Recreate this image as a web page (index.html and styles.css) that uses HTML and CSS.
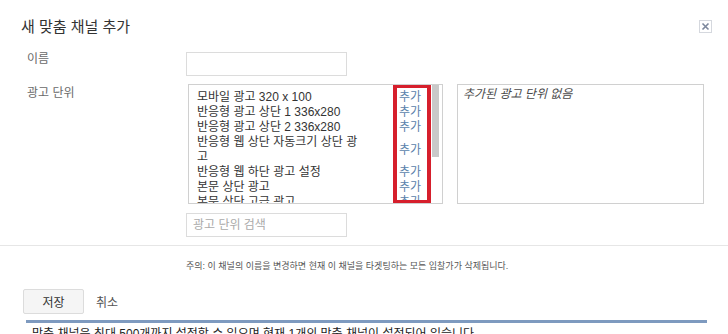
FILE: index.html
```html
<!DOCTYPE html>
<html lang="ko">
<head>
    <meta charset="UTF-8">
    <title>새 맞춤 채널 추가</title>
    <link rel="stylesheet" href="styles.css">
</head>
<body>
    <div class="dialog">
        <div class="dialog-head">
            <h2 class="dialog-title">새 맞춤 채널 추가</h2>
            <button class="close" title="닫기">
                <svg width="13" height="13" viewBox="0 0 13 13">
                    <rect x="0.5" y="0.5" width="12" height="12" fill="#fff" stroke="#d5d8de"/>
                    <path d="M3.5 3.5 L9.5 9.5 M9.5 3.5 L3.5 9.5" stroke="#7c879c" stroke-width="1.6"/>
                </svg>
            </button>
        </div>

        <div class="form">
            <div class="form-row">
                <label class="form-label" for="nombreCanal">이름</label>
                <input type="text" id="nombreCanal" class="text-input">
            </div>

            <div class="form-row">
                <span class="form-label label-units">광고 단위</span>
                <div class="unit-picker">
                    <div class="unit-col">
                        <div class="unit-list">
                            <ul class="unit-items">
                                <li><span class="unit-name">모바일 광고 320 x 100</span><a class="add" href="#">추가</a></li>
                                <li><span class="unit-name">반응형 광고 상단 1 336x280</span><a class="add" href="#">추가</a></li>
                                <li><span class="unit-name">반응형 광고 상단 2 336x280</span><a class="add" href="#">추가</a></li>
                                <li><span class="unit-name">반응형 웹 상단 자동크기 상단 광고</span><a class="add" href="#">추가</a></li>
                                <li><span class="unit-name">반응형 웹 하단 광고 설정</span><a class="add" href="#">추가</a></li>
                                <li><span class="unit-name">본문 상단 광고</span><a class="add" href="#">추가</a></li>
                                <li><span class="unit-name">본문 상단 고급 광고</span><a class="add" href="#">추가</a></li>
                                <li><span class="unit-name">본문 하단 광고</span><a class="add" href="#">추가</a></li>
                            </ul>
                            <div class="scrollbar"><div class="scroll-thumb"></div></div>
                            <!-- 추가 버튼 강조 표시 -->
                            <div class="highlight"></div>
                        </div>
                        <input type="text" class="text-input search" placeholder="광고 단위 검색">
                    </div>
                    <div class="selected-box">
                        <em>추가된 광고 단위 없음</em>
                    </div>
                </div>
            </div>
        </div>

        <div class="divider"></div>

        <p class="notice">주의: 이 채널의 이름을 변경하면 현재 이 채널을 타겟팅하는 모든 입찰가가 삭제됩니다.</p>

        <div class="actions">
            <button class="btn-save">저장</button>
            <a class="cancel" href="#">취소</a>
        </div>
    </div>

    <div class="summary-bar"></div>
    <p class="summary">맞춤 채널은 최대 500개까지 설정할 수 있으며 현재 1개의 맞춤 채널이 설정되어 있습니다.</p>
</body>
</html>
```

FILE: styles.css
```css
/* 기본 */
body {
    margin: 0;
    background: #fff;
    font-family: "Liberation Sans", "Noto Sans CJK KR", sans-serif;
    font-size: 12px;
    color: #333;
}

/* 헤더 */
.dialog-head {
    display: flex;
    align-items: flex-start;
    padding: 18px 16px 0 21px;
    margin-bottom: 16px;
}

.dialog-title {
    flex: 1;
    margin: 0;
    font-size: 15px;
    font-weight: normal;
    line-height: 18px;
    color: #333;
}

.close {
    margin-top: 2px;
    padding: 0;
    border: none;
    background: none;
    width: 13px;
    height: 13px;
    cursor: pointer;
}

.close svg {
    display: block;
}

/* 폼 */
.form {
    display: flex;
    flex-direction: column;
    gap: 8px;
}

.form-row {
    display: flex;
    align-items: flex-start;
}

.form-label {
    flex: 0 0 186px;
    padding-left: 27px;
    box-sizing: border-box;
    line-height: 14px;
    color: #6a6a6a;
}

.label-units {
    padding-top: 2px;
}

.text-input {
    width: 161px;
    height: 24px;
    box-sizing: border-box;
    border: 1px solid #dcdcdc;
    padding: 0 6px;
    font-family: inherit;
    font-size: 12px;
    color: #333;
    outline: none;
}

.text-input::placeholder {
    color: #aaa;
}

.unit-picker {
    display: flex;
    align-items: flex-start;
    gap: 14px;
}

.unit-col {
    display: flex;
    flex-direction: column;
    gap: 9px;
}

/* 광고 단위 목록 */
.unit-list {
    position: relative;
    display: flex;
    margin-left: 2px;
    width: 255px;
    height: 120px;
    box-sizing: border-box;
    border: 1px solid #d0d0d0;
    overflow: hidden;
}

.unit-items {
    flex: 1;
    list-style: none;
    margin: 0;
    padding: 5px 0 0 0;
    overflow: hidden;
    color: #333;
}

.unit-items li {
    display: flex;
    align-items: center;
    padding: 0 10px 0 8px;
    line-height: 15px;
}

.unit-name {
    width: 166px;
}

.add {
    margin-left: auto;
    color: #5a7fab;
    text-decoration: none;
}

.scrollbar {
    flex: 0 0 11px;
    box-sizing: border-box;
    padding: 0 3px 0 1px;
}

.scroll-thumb {
    height: 72px;
    background: #c9c9c9;
}

/* 빨간 강조 박스 */
.highlight {
    position: absolute;
    left: 204px;
    top: -1px;
    width: 38px;
    height: 120px;
    box-sizing: border-box;
    border: 4px solid #d61f2c;
    pointer-events: none;
}

.selected-box {
    width: 247px;
    height: 120px;
    box-sizing: border-box;
    border: 1px solid #d0d0d0;
    padding: 2px 5px;
    line-height: 15px;
}

.selected-box em {
    font-style: italic;
    color: #4a4a4a;
}

/* 구분선과 안내 */
.divider {
    height: 1px;
    background: #e6e6e6;
    margin-top: 8px;
}

.notice {
    margin: 14px 0 0 0;
    padding-left: 186px;
    font-size: 9px;
    line-height: 13px;
    color: #555;
}

/* 버튼 */
.actions {
    display: flex;
    align-items: center;
    margin-top: 16px;
    padding-left: 23px;
}

.btn-save {
    width: 61px;
    height: 25px;
    border: 1px solid #dcdcdc;
    border-radius: 2px;
    background: #f5f5f5;
    font-family: inherit;
    font-size: 12px;
    color: #333;
    cursor: pointer;
}

.cancel {
    margin-left: 12px;
    color: #555;
    text-decoration: none;
}

/* 하단 요약 */
.summary-bar {
    height: 3px;
    margin: 6px 21px 0 26px;
    background: #7e9abf;
}

.summary {
    margin: 0;
    padding: 3px 0 0 32px;
    line-height: 16px;
    color: #222;
}
```
